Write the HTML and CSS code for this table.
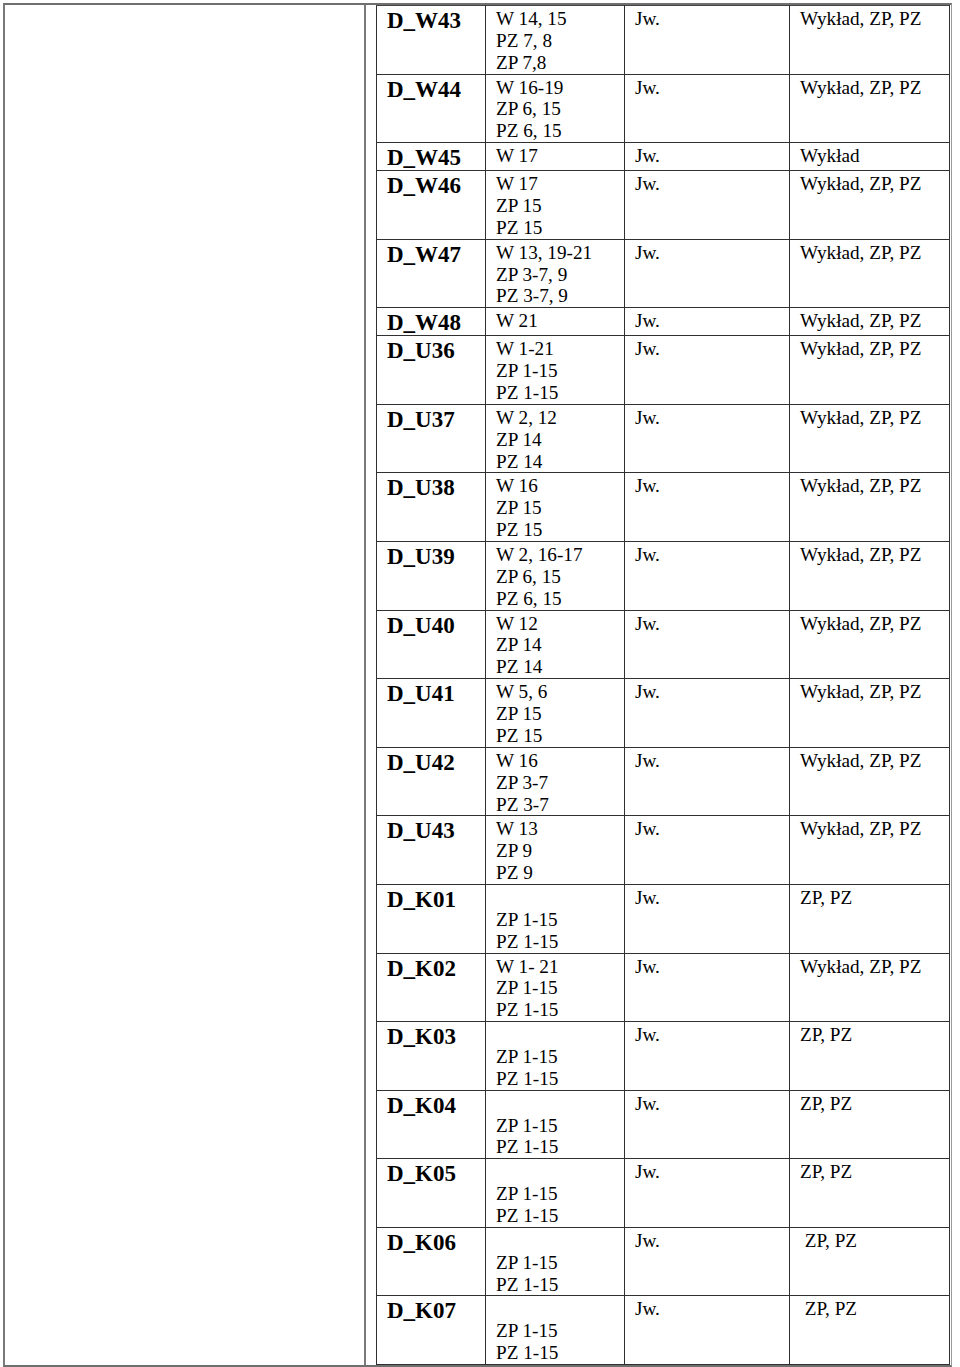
FILE: index.html
```html
<!DOCTYPE html>
<html lang="pl">
<head>
<meta charset="utf-8">
<title>Efekty</title>
<link rel="stylesheet" href="styles.css">
</head>
<body>
<div class="frame">
  <div class="blank"></div>
  <div class="content">
    <table class="grid">
      <colgroup>
        <col class="c1"><col class="c2"><col class="c3"><col class="c4">
      </colgroup>
      <tbody>
        <tr><td class="code">D_W43</td><td>W 14, 15<br>PZ 7, 8<br>ZP 7,8</td><td>Jw.</td><td>Wykład, ZP, PZ</td></tr>
        <tr><td class="code">D_W44</td><td>W 16-19<br>ZP 6, 15<br>PZ 6, 15</td><td>Jw.</td><td>Wykład, ZP, PZ</td></tr>
        <tr><td class="code">D_W45</td><td>W 17</td><td>Jw.</td><td>Wykład</td></tr>
        <tr><td class="code">D_W46</td><td>W 17<br>ZP 15<br>PZ 15</td><td>Jw.</td><td>Wykład, ZP, PZ</td></tr>
        <tr><td class="code">D_W47</td><td>W 13, 19-21<br>ZP 3-7, 9<br>PZ 3-7, 9</td><td>Jw.</td><td>Wykład, ZP, PZ</td></tr>
        <tr><td class="code">D_W48</td><td>W 21</td><td>Jw.</td><td>Wykład, ZP, PZ</td></tr>
        <tr><td class="code">D_U36</td><td>W 1-21<br>ZP 1-15<br>PZ 1-15</td><td>Jw.</td><td>Wykład, ZP, PZ</td></tr>
        <tr><td class="code">D_U37</td><td>W 2, 12<br>ZP 14<br>PZ 14</td><td>Jw.</td><td>Wykład, ZP, PZ</td></tr>
        <tr><td class="code">D_U38</td><td>W 16<br>ZP 15<br>PZ 15</td><td>Jw.</td><td>Wykład, ZP, PZ</td></tr>
        <tr><td class="code">D_U39</td><td>W 2, 16-17<br>ZP 6, 15<br>PZ 6, 15</td><td>Jw.</td><td>Wykład, ZP, PZ</td></tr>
        <tr><td class="code">D_U40</td><td>W 12<br>ZP 14<br>PZ 14</td><td>Jw.</td><td>Wykład, ZP, PZ</td></tr>
        <tr><td class="code">D_U41</td><td>W 5, 6<br>ZP 15<br>PZ 15</td><td>Jw.</td><td>Wykład, ZP, PZ</td></tr>
        <tr><td class="code">D_U42</td><td>W 16<br>ZP 3-7<br>PZ 3-7</td><td>Jw.</td><td>Wykład, ZP, PZ</td></tr>
        <tr><td class="code">D_U43</td><td>W 13<br>ZP 9<br>PZ 9</td><td>Jw.</td><td>Wykład, ZP, PZ</td></tr>
        <tr><td class="code">D_K01</td><td>&nbsp;<br>ZP 1-15<br>PZ 1-15</td><td>Jw.</td><td>ZP, PZ</td></tr>
        <tr><td class="code">D_K02</td><td>W 1- 21<br>ZP 1-15<br>PZ 1-15</td><td>Jw.</td><td>Wykład, ZP, PZ</td></tr>
        <tr><td class="code">D_K03</td><td>&nbsp;<br>ZP 1-15<br>PZ 1-15</td><td>Jw.</td><td>ZP, PZ</td></tr>
        <tr><td class="code">D_K04</td><td>&nbsp;<br>ZP 1-15<br>PZ 1-15</td><td>Jw.</td><td>ZP, PZ</td></tr>
        <tr><td class="code">D_K05</td><td>&nbsp;<br>ZP 1-15<br>PZ 1-15</td><td>Jw.</td><td>ZP, PZ</td></tr>
        <tr><td class="code">D_K06</td><td>&nbsp;<br>ZP 1-15<br>PZ 1-15</td><td>Jw.</td><td>&nbsp;ZP, PZ</td></tr>
        <tr><td class="code">D_K07</td><td>&nbsp;<br>ZP 1-15<br>PZ 1-15</td><td>Jw.</td><td>&nbsp;ZP, PZ</td></tr>
      </tbody>
    </table>
  </div>
</div>
</body>
</html>
```

FILE: styles.css
```css
html, body {
  margin: 0;
  padding: 0;
  background: #ffffff;
}

body {
  font-family: "Liberation Serif", "Times New Roman", serif;
  color: #000;
}

.frame {
  margin: 3px 0 0 3px;
  width: 946px;
  display: flex;
  align-items: stretch;
  border-top: 2px solid #6f6f6f;
  border-left: 2px solid #7a7a7a;
  border-bottom: 2px solid #6f6f6f;
  border-right: 1px solid #9a9a9a;
}

.blank {
  width: 359px;
  flex: none;
  border-right: 2px solid #7a7a7a;
}

.content {
  flex: 1;
  padding-left: 10px;
}

.grid {
  border-collapse: collapse;
  table-layout: fixed;
  width: 573px;
}

.c1 { width: 109px; }
.c2 { width: 139px; }
.c3 { width: 165px; }
.c4 { width: 160px; }

.grid td {
  border: 1px solid #303030;
  vertical-align: top;
  padding: 2px 0 0 10px;
  font-size: 19.2px;
  line-height: 21.86px;
  white-space: nowrap;
}

.grid tr:first-child td {
  border-top-color: #444;
}

.grid td.code {
  font-weight: bold;
  font-size: 23px;
  line-height: 25px;
}
```
